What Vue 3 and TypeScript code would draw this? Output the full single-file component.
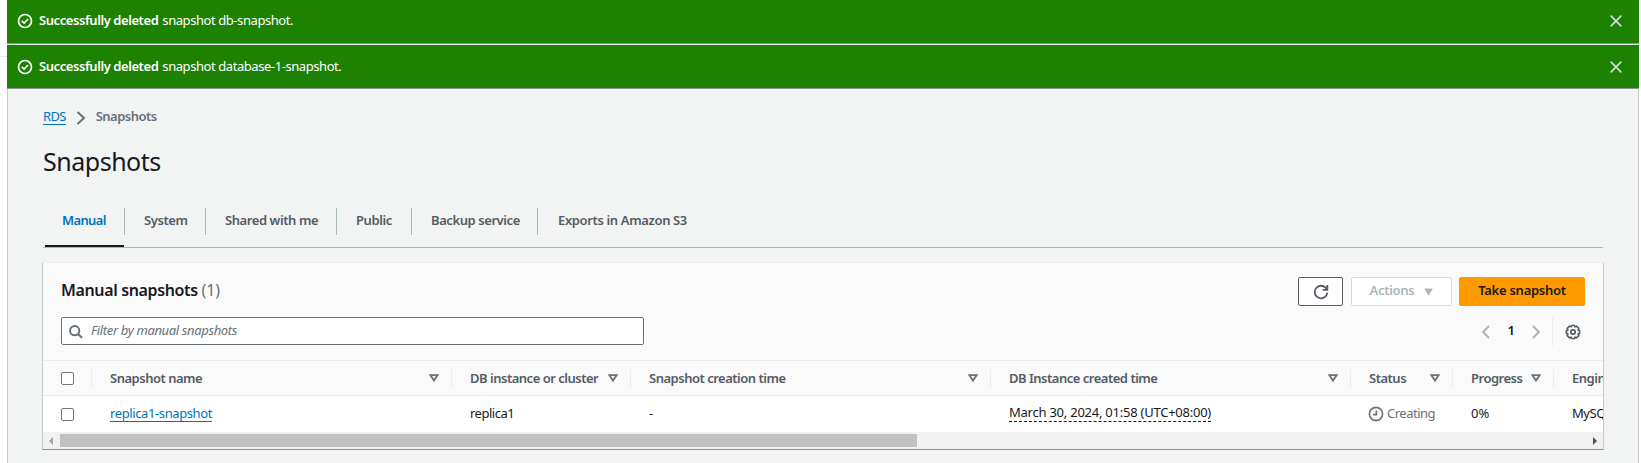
<script setup lang="ts">
interface Flash { id: number; subject: string }
interface Column { key: string; label: string }

const flashes: Flash[] = [
  { id: 1, subject: 'snapshot db-snapshot.' },
  { id: 2, subject: 'snapshot database-1-snapshot.' },
]
const tabs: string[] = ['Manual', 'System', 'Shared with me', 'Public', 'Backup service', 'Exports in Amazon S3']
const columns: Column[] = [
  { key: 'name', label: 'Snapshot name' },
  { key: 'instance', label: 'DB instance or cluster' },
  { key: 'creation', label: 'Snapshot creation time' },
  { key: 'created', label: 'DB Instance created time' },
  { key: 'status', label: 'Status' },
  { key: 'progress', label: 'Progress' },
]
</script>

<template>
  <div class="page">
    <header class="flashes">
      <div v-for="f in flashes" :key="f.id" class="flash">
        <svg class="ok" viewBox="0 0 16 16"><circle cx="8" cy="8" r="6.5" /><path d="M4.8 7.9 7.1 10.1 11.1 6" /></svg>
        <p><b>Successfully deleted</b><span class="subject">{{ f.subject }}</span></p>
        <svg class="close" viewBox="0 0 12 12"><path d="M.7.7 11.3 11.3M11.3.7.7 11.3" /></svg>
      </div>
    </header>

    <main class="content">
      <nav class="crumbs">
        <a class="rds">RDS</a>
        <svg viewBox="0 0 10 14"><path d="M1.5 1 8 7 1.5 13" /></svg>
        <b>Snapshots</b>
      </nav>
      <h1>Snapshots</h1>

      <div class="tabs">
        <div v-for="(t, i) in tabs" :key="t" class="tab" :class="{ active: i === 0 }"><span>{{ t }}</span></div>
      </div>

      <section class="card">
        <div class="top">
          <h2>Manual snapshots <small>(1)</small></h2>
          <div class="actions">
            <div class="btn refresh">
              <svg viewBox="0 0 16 16"><path d="M14.3 8.6A6.3 6.3 0 1 1 12.6 3.7L14.2 5.6" /><path d="M9.6 5.9H14.3V1" /></svg>
            </div>
            <div class="btn disabled"><span>Actions</span><svg viewBox="0 0 9 8"><path d="M.2.4H8.8L4.5 7.8Z" /></svg></div>
            <div class="btn primary"><span>Take snapshot</span></div>
          </div>
        </div>

        <div class="tools">
          <div class="search">
            <svg viewBox="0 0 14 14"><circle cx="5.7" cy="5.7" r="4.6" /><path d="M9 9 13 12.8" /></svg>
            <i>Filter by manual snapshots</i>
          </div>
          <div class="pager">
            <svg class="chev" viewBox="0 0 8 14"><path d="M7 1 1.2 7 7 13" /></svg>
            <b>1</b>
            <svg class="chev" viewBox="0 0 8 14"><path d="M1 1 6.8 7 1 13" /></svg>
            <div class="gearbox">
              <svg class="gear" viewBox="0 0 16 16">
                <path d="M6.6 1.5H9.4L10 2.8 11.6 2.2 13.8 4.4 13.2 6 14.5 6.6V9.4L13.2 10 13.8 11.6 11.6 13.8 10 13.2 9.4 14.5H6.6L6 13.2 4.4 13.8 2.2 11.6 2.8 10 1.5 9.4V6.6L2.8 6 2.2 4.4 4.4 2.2 6 2.8Z" />
                <circle cx="8" cy="8" r="2.2" />
              </svg>
            </div>
          </div>
        </div>

        <div class="row head">
          <div class="cell pick"><span class="box" /></div>
          <div v-for="c in columns" :key="c.key" class="cell">
            <span>{{ c.label }}</span>
            <svg class="sort" viewBox="0 0 10 8"><path d="M1.4 1.2H8.6L5 6.6Z" /></svg>
          </div>
          <div class="cell"><span>Engine</span></div>
        </div>
        <div class="row data">
          <div class="cell pick"><span class="box" /></div>
          <div class="cell"><a class="name">replica1-snapshot</a></div>
          <div class="cell tight"><span>replica1</span></div>
          <div class="cell">-</div>
          <div class="cell"><span class="date">March 30, 2024, 01:58 (UTC+08:00)</span></div>
          <div class="cell status">
            <svg viewBox="0 0 16 16"><circle cx="8" cy="8" r="6.6" /><path d="M8.4 4.4V8.6H5" /></svg>
            <span>Creating</span>
          </div>
          <div class="cell pct">0%</div>
          <div class="cell">MySQL</div>
        </div>
        <div class="scroll">
          <svg viewBox="0 0 4 8"><path d="M4 0V8L0 4Z" /></svg>
          <div class="track"><div class="thumb" /></div>
          <svg class="right" viewBox="0 0 4 8"><path d="M0 0V8L4 4Z" /></svg>
        </div>
      </section>
    </main>
  </div>
</template>

<style>
body { overflow: hidden; background: #fff; }
</style>

<style scoped>
* { box-sizing: border-box; }
.page { width: 1641px; height: 463px; padding: 0 2px 0 7px; overflow: hidden; font: 13px/20px "Noto Sans", "Open Sans", sans-serif; letter-spacing: -.43px; color: #16191f; white-space: nowrap; background: linear-gradient(#eaeded, #eaeded) 0 56px / 7px 1px no-repeat #fff; }
b { font-weight: 600; }
svg { fill: none; flex: none; display: block; }
.flash { height: 44px; display: flex; align-items: center; padding: 0 17px 2px 10px; background: #1d8102; border-bottom: 1px solid #879596; color: #fff; }
.flash + .flash { height: 45px; border-top: 1px solid #eaeded; padding-bottom: 0; }
.flash p { margin: 0 0 1px 6px; flex: 1; }
.flash + .flash p { margin-bottom: 2px; }
.subject { margin-left: 4px; }
.ok { width: 16px; height: 16px; stroke: #fff; stroke-width: 1.7; }
.close { width: 12px; height: 12px; stroke: #d5dbdb; stroke-width: 1.7; }

.content { height: 374px; padding: 16px 35px 0; background: #f2f3f3; border: solid #c3caca; border-width: 0 1px; }
.crumbs { display: flex; align-items: center; height: 22px; color: #687078; }
.rds { color: #0073bb; line-height: 16px; border-bottom: 1px solid #0073bb; letter-spacing: -.7px; }
.crumbs svg { width: 10px; height: 14px; margin: 3px 9px 0 10px; stroke: #687078; stroke-width: 2; }
.crumbs b { letter-spacing: -.5px; margin-left: 1px; }
h1 { margin: 16px 0 0; font-size: 25px; line-height: 36px; font-weight: 400; letter-spacing: -.48px; }

.tabs { height: 55px; margin-top: 14px; display: grid; grid-template-columns: 82px 81px 131px 75px 126px 1fr; border-bottom: 1px solid #aab7b8; }
.tab { position: relative; height: 27px; margin-top: 15px; padding: 2px 0 0 19px; border-right: 1px solid #aab7b8; font-weight: 600; color: #545b64; letter-spacing: -.42px; }
.tab:last-child { border: 0; padding-left: 20px; letter-spacing: -.36px; }
.tab.active { color: #0073bb; letter-spacing: -.65px; }
.tab.active::after { content: ""; position: absolute; left: 2px; right: 0; top: 37px; height: 2px; background: #16191f; }

.card { margin: 14px 0 0 -1px; width: 1562px; height: 188px; background: #fff; border: 1px solid #c3caca; border-top-color: #eaeded; border-bottom-color: #879596; overflow: hidden; }
.top, .tools { background: #fafafa; display: flex; justify-content: space-between; padding-left: 18px; }
.top { height: 54px; padding-top: 14px; padding-right: 18px; }
h2 { margin: 0; font-size: 16px; line-height: 27px; font-weight: 600; letter-spacing: -.36px; }
h2 small { font-size: 16px; font-weight: 400; color: #687078; letter-spacing: -.1px; }
.actions { display: flex; }
.btn { height: 29px; border: 1px solid #545b64; border-radius: 2px; background: #fff; display: flex; justify-content: center; align-items: center; font-weight: 600; letter-spacing: -.28px; }
.btn span { margin-bottom: 3px; }
.refresh { width: 45px; }
.refresh svg { width: 16px; height: 16px; stroke: #545b64; stroke-width: 1.8; }
.disabled { width: 101px; margin: 0 7px 0 8px; border-color: #d5dbdb; color: #aab7b8; gap: 10px; }
.disabled svg { width: 9px; height: 8px; fill: #aab7b8; }
.primary { width: 126px; background: #ff9900; border-color: #ff9900; letter-spacing: -.26px; }
.tools { height: 43px; padding-right: 17px; }
.search { width: 583px; height: 28px; border: 1px solid #687078; border-radius: 2px; background: #fff; display: flex; align-items: center; color: #687078; letter-spacing: -.36px; }
.search svg { width: 14px; height: 14px; margin: 1px 8px 0 7px; stroke: #687078; stroke-width: 2; }
.search i { margin-bottom: 2px; }
.pager { display: flex; align-items: center; height: 29px; }
.pager b { width: 10px; margin: 0 16px 4px; text-align: center; }
.chev { width: 8px; height: 14px; stroke: #aab7b8; stroke-width: 2; }
.gearbox { height: 29px; margin-left: 12px; padding: 7px 5px 0 12px; border-left: 1px solid #eaeded; }
.gear { width: 16px; height: 16px; stroke: #545b64; stroke-width: 1.7; }

.row { display: grid; grid-template-columns: 49px 360px 179px 360px 360px 102px 101px 200px; }
.head { height: 36px; padding: 8px 0; background: #fafafa; border-top: 1px solid #eaeded; border-bottom: 1px solid #eaeded; font-weight: 600; color: #545b64; letter-spacing: -.49px; }
.cell { display: flex; align-items: center; padding-left: 18px; }
.head .cell { justify-content: space-between; border-right: 1px solid #eaeded; padding-right: 12px; height: 18px; }
.head .cell:last-child { justify-content: flex-start; }
.sort { width: 10px; height: 8px; stroke: #687078; stroke-width: 1.8; }
.data { height: 36px; padding-bottom: 2px; }
.box { width: 13px; height: 13px; border: 1px solid #767676; border-radius: 2px; background: #fff; }
.data .box { margin-top: 3px; }
.name { color: #0073bb; border-bottom: 1px solid #0073bb; line-height: 16px; letter-spacing: -.39px; }
.date { border-bottom: 1px dashed #16191f; line-height: 17px; letter-spacing: -.24px; }
.tight, .status { letter-spacing: -.5px; }
.status { color: #687078; }
.status svg { width: 16px; height: 16px; margin: 2px 3px 0 -1px; stroke: #687078; stroke-width: 1.6; }
.pct { letter-spacing: 0; }
.scroll { height: 17px; background: #f1f1f1; display: flex; align-items: center; padding: 0 6px; }
.scroll svg { width: 4px; height: 8px; fill: #a3a3a3; }
.scroll .right { fill: #505050; }
.track { flex: 1; margin: 0 7px; }
.thumb { width: 857px; height: 13px; background: #c1c1c1; }
</style>
